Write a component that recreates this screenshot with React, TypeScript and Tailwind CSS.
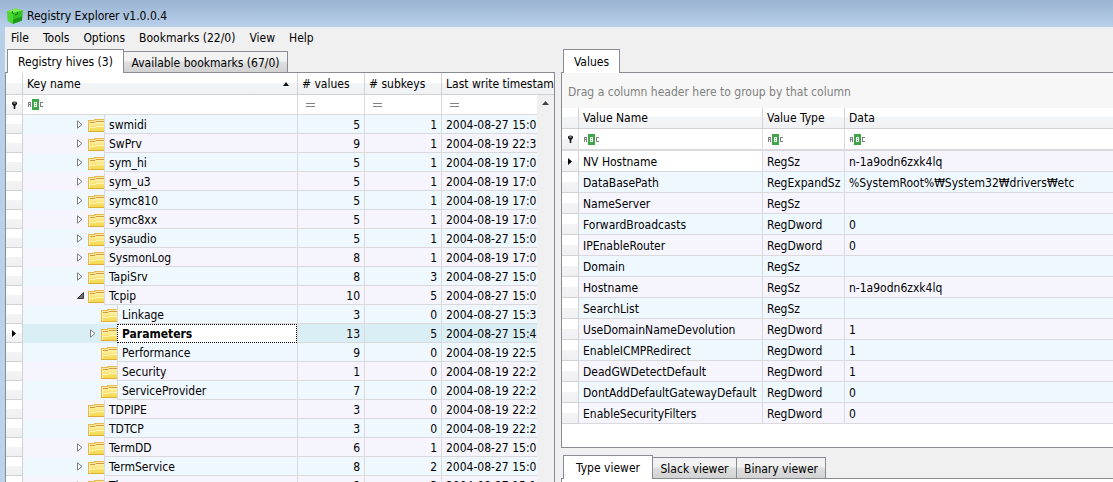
import React from "react";

type HiveRow = {
  name: string;
  values: number;
  subkeys: number;
  written: string;
  level?: number;
  state?: "open" | "closed";
  selected?: boolean;
};

const hiveRows: HiveRow[] = [
  { name: "swmidi", values: 5, subkeys: 1, written: "2004-08-27 15:0", state: "closed" },
  { name: "SwPrv", values: 9, subkeys: 1, written: "2004-08-19 22:3", state: "closed" },
  { name: "sym_hi", values: 5, subkeys: 1, written: "2004-08-19 17:0", state: "closed" },
  { name: "sym_u3", values: 5, subkeys: 1, written: "2004-08-19 17:0", state: "closed" },
  { name: "symc810", values: 5, subkeys: 1, written: "2004-08-19 17:0", state: "closed" },
  { name: "symc8xx", values: 5, subkeys: 1, written: "2004-08-19 17:0", state: "closed" },
  { name: "sysaudio", values: 5, subkeys: 1, written: "2004-08-27 15:0", state: "closed" },
  { name: "SysmonLog", values: 8, subkeys: 1, written: "2004-08-19 17:0", state: "closed" },
  { name: "TapiSrv", values: 8, subkeys: 3, written: "2004-08-27 15:0", state: "closed" },
  { name: "Tcpip", values: 10, subkeys: 5, written: "2004-08-27 15:0", state: "open" },
  { name: "Linkage", values: 3, subkeys: 0, written: "2004-08-27 15:3", level: 1 },
  { name: "Parameters", values: 13, subkeys: 5, written: "2004-08-27 15:4", level: 1, state: "closed", selected: true },
  { name: "Performance", values: 9, subkeys: 0, written: "2004-08-19 22:5", level: 1 },
  { name: "Security", values: 1, subkeys: 0, written: "2004-08-19 22:2", level: 1 },
  { name: "ServiceProvider", values: 7, subkeys: 0, written: "2004-08-19 22:2", level: 1 },
  { name: "TDPIPE", values: 3, subkeys: 0, written: "2004-08-19 22:2" },
  { name: "TDTCP", values: 3, subkeys: 0, written: "2004-08-19 22:2" },
  { name: "TermDD", values: 6, subkeys: 1, written: "2004-08-27 15:0", state: "closed" },
  { name: "TermService", values: 8, subkeys: 2, written: "2004-08-27 15:0", state: "closed" },
  { name: "Themes", values: 9, subkeys: 3, written: "2004-08-27 15:1", state: "closed" },
];

const valueRows: [string, string, string][] = [
  ["NV Hostname", "RegSz", "n-1a9odn6zxk4lq"],
  ["DataBasePath", "RegExpandSz", "%SystemRoot%₩System32₩drivers₩etc"],
  ["NameServer", "RegSz", ""],
  ["ForwardBroadcasts", "RegDword", "0"],
  ["IPEnableRouter", "RegDword", "0"],
  ["Domain", "RegSz", ""],
  ["Hostname", "RegSz", "n-1a9odn6zxk4lq"],
  ["SearchList", "RegSz", ""],
  ["UseDomainNameDevolution", "RegDword", "1"],
  ["EnableICMPRedirect", "RegDword", "1"],
  ["DeadGWDetectDefault", "RegDword", "1"],
  ["DontAddDefaultGatewayDefault", "RegDword", "0"],
  ["EnableSecurityFilters", "RegDword", "0"],
];

const headBg = "bg-[linear-gradient(#ffffff_0_45%,#f4f5f7_45%,#f0f1f3_100%)]";
const headCell = "border-r border-b border-[#d2d2d4] px-1 text-left font-normal truncate text-clip";
const filterCell = "border-r border-b border-[#dadadc] bg-white px-1";
const bodyCell = "border-r border-b border-[#dadadc] px-1 pt-0.5 whitespace-nowrap overflow-hidden";
const markBg = "bg-[linear-gradient(#ffffff_0_50%,#f4f4f5_50%,#f0f0f2_100%)]";

function CubeIcon() {
  return (
    <svg width="16" height="16" viewBox="0 0 16 16" aria-hidden="true">
      <path d="M.5 3.200 8.500.6 15.500 2.500 15 12.500 6 15.700.8 12.700z" fill="#2fb51f" />
      <path d="M.5 3.200 8.500.6 15.500 2.500 6.400 5z" fill="#7df04d" />
      <path d="M.5 3.200 6.400 5 6 15.700.8 12.700z" fill="#49d92f" />
      <path d="M6.400 5 15.500 2.500 15 12.500 6 15.700z" fill="#33c522" />
      <path d="m6.200 11.500 8.900-3-.1 4L6 15.700z" fill="#1c9a15" />
      <path d="M5.500 3v2.200l1.500.4M10.500 4v2L8 7" fill="none" stroke="#14770f" />
    </svg>
  );
}

function FolderIcon() {
  return (
    <svg width="16" height="14" viewBox="0 0 16 14" className="shrink-0" aria-hidden="true">
      <defs>
        <linearGradient id="folder" x1="0" y1="0" x2="0" y2="1">
          <stop offset="0" stopColor="#fdf2a8" />
          <stop offset=".5" stopColor="#f9e375" />
          <stop offset="1" stopColor="#f5d84c" />
        </linearGradient>
      </defs>
      <path d="M0 2h6V1h10v13H0z" fill="#e9b94a" />
      <path d="M1 3h5.500l1-1H16v2H1z" fill="#fbe9a6" />
      <path d="M1 4h15v9H1z" fill="url(#folder)" />
      <path d="M2 4.500h5l1-1h8" fill="none" stroke="#d49b3f" />
      <path d="M1.500 5v8" stroke="#fdf0a8" />
      <path d="M2 9.500h5l2-1h7" fill="none" stroke="#fdf3b4" />
      <path d="M0 13.500h16" stroke="#dfae38" />
    </svg>
  );
}

function Expander({ state }: { state?: "open" | "closed" }) {
  return (
    <svg width="7" height="9" viewBox="0 0 7 9" className="shrink-0" aria-hidden="true">
      {state === "closed" && <path d="M.5.8 5 4.500.5 8.200z" fill="#fff" stroke="#808080" />}
      {state === "open" && <path d="M6.500 1.500v6h-6z" fill="#707070" stroke="#3a3a3a" />}
    </svg>
  );
}

function RowArrow() {
  return (
    <svg width="4" height="7" viewBox="0 0 4 7" className="mx-auto block" aria-hidden="true">
      <path d="M0 0 4 3.500 0 7z" fill="#000" />
    </svg>
  );
}

function PinIcon() {
  return (
    <svg width="7" height="8" viewBox="0 0 7 8" className="mx-auto block" aria-hidden="true">
      <path d="M1 1.400Q3.500-.6 6 1.400V3L4.300 5V8H2.700V5L1 3z" fill="#111" />
      <path d="M2.500 2h2" stroke="#fff" />
    </svg>
  );
}

function ContainsFilter({ label }: { label: string }) {
  return (
    <button type="button" aria-label={label} className="flex h-4 items-center pl-px">
      <svg width="16" height="11" viewBox="0 0 16 11" shapeRendering="crispEdges" aria-hidden="true">
        <rect x="4" width="7" height="11" fill="#3fa648" />
        <path d="M.5 8V3.500H2.500V8M.5 5.500h2" fill="none" stroke="#808080" />
        <path d="M6.500 3v5M6 3.500h2.500V7.500H6M6 5.500h2" fill="none" stroke="#fff" />
        <path d="M15 3.500H12.500V7.500H15" fill="none" stroke="#808080" />
      </svg>
    </button>
  );
}

function EqualsFilter({ label }: { label: string }) {
  return (
    <button type="button" aria-label={label} className="flex h-4 items-center pl-1">
      <svg width="9" height="4" viewBox="0 0 9 4" shapeRendering="crispEdges" aria-hidden="true">
        <path d="M0 .5h9M0 3.500h9" stroke="#808080" />
      </svg>
    </button>
  );
}

function Tab({ label, active, className }: { label: string; active?: boolean; className: string }) {
  return (
    <button
      type="button"
      role="tab"
      aria-selected={!!active}
      className={
        (active
          ? "z-10 -mb-px h-6 bg-white "
          : "-ml-px h-[21px] bg-[linear-gradient(#f2f2f2_0_45%,#dfdfdf_50%,#d2d2d2_100%)] pt-px ") +
        "flex items-center justify-center border border-b-0 border-[#898c95] whitespace-nowrap " +
        className
      }
    >
      {label}
    </button>
  );
}

function HivesTable() {
  return (
    <table className="w-full table-fixed border-separate border-spacing-0">
      <colgroup>
        <col className="w-[17px]" />
        <col />
        <col className="w-[67px]" />
        <col className="w-[77px]" />
        <col className="w-[95px]" />
        <col className="w-[17px]" />
      </colgroup>
      <thead>
        <tr className={"h-[22px] " + headBg}>
          <th className={headCell} aria-label="Row" />
          <th className={headCell}>
            <span className="flex items-center justify-between">
              Key name
              <svg width="6" height="4" viewBox="0 0 6 4" className="mr-1" aria-hidden="true">
                <path d="M3 0 6 4H0z" fill="#111" />
              </svg>
            </span>
          </th>
          <th className={headCell}># values</th>
          <th className={headCell}># subkeys</th>
          <th className={headCell + " border-r-0 pr-0"} colSpan={2}>Last write timestamp</th>
        </tr>
      </thead>
      <tbody>
        <tr className="h-5">
          <td className={"border-r border-b border-[#dadadc] " + markBg}><PinIcon /></td>
          <td className={filterCell}><ContainsFilter label="Filter key name" /></td>
          <td className={filterCell}><EqualsFilter label="Filter values" /></td>
          <td className={filterCell}><EqualsFilter label="Filter subkeys" /></td>
          <td className={filterCell + " border-r-0"}><EqualsFilter label="Filter timestamp" /></td>
          <td rowSpan={hiveRows.length + 1} className="bg-[#f0f0f0] align-top">
            <button type="button" aria-label="Scroll up" className="flex h-4 w-4 items-center justify-center">
              <svg width="7" height="4" viewBox="0 0 7 4" aria-hidden="true">
                <path d="M3.500 0 7 4H0z" fill="#444" />
              </svg>
            </button>
          </td>
        </tr>
        {hiveRows.map((r, i) => (
          <tr
            key={r.name}
            className={"h-[19px] leading-4 " + (r.selected ? "bg-[#daeef6]" : i % 2 ? "bg-[#f6f5fe]" : "bg-[#f0f8ff]")}
          >
            <td className={"border-r border-b border-[#d2d2d4] " + markBg}>{r.selected && <RowArrow />}</td>
            <td className="border-r border-[#dadadc]">
              <div className={"flex h-[19px] items-center " + (r.level ? "pl-[67px]" : "pl-[54px]")}>
                <Expander state={r.state} />
                <span className="flex pt-px pl-1"><FolderIcon /></span>
                <span
                  className={
                    "flex h-full min-w-0 flex-1 items-center pl-1 " +
                    (r.selected
                      ? "border border-dotted border-black bg-white font-bold"
                      : "border-b border-l border-[#dadadc] pt-0.5")
                  }
                >
                  {r.name}
                </span>
              </div>
            </td>
            <td className={bodyCell + " text-right"}>{r.values}</td>
            <td className={bodyCell + " text-right"}>{r.subkeys}</td>
            <td className={bodyCell + " border-r-0 pr-0"}>{r.written}</td>
          </tr>
        ))}
      </tbody>
    </table>
  );
}

function ValuesTable() {
  return (
    <table className="w-full table-fixed border-separate border-spacing-0">
      <colgroup>
        <col className="w-[17px]" />
        <col className="w-[184px]" />
        <col className="w-[82px]" />
        <col />
      </colgroup>
      <thead>
        <tr className={"h-[21px] " + headBg}>
          <th className={headCell} aria-label="Row" />
          <th className={headCell}>Value Name</th>
          <th className={headCell}>Value Type</th>
          <th className={headCell + " border-r-0"}>Data</th>
        </tr>
      </thead>
      <tbody>
        <tr className="h-[22px]">
          <td className={"border-r border-b-2 border-[#dadadc] " + markBg}><PinIcon /></td>
          <td className={filterCell + " border-b-2"}><ContainsFilter label="Filter value name" /></td>
          <td className={filterCell + " border-b-2"}><ContainsFilter label="Filter value type" /></td>
          <td className={filterCell + " border-r-0 border-b-2"}><ContainsFilter label="Filter data" /></td>
        </tr>
        {valueRows.map(([name, type, data], i) => (
          <tr key={name} className={"h-[21px] leading-4 " + (i % 2 ? "bg-[#f0f8ff]" : "bg-[#f6f5fe]")}>
            <td className={"border-r border-b border-[#d2d2d4] " + markBg}>{i === 0 && <RowArrow />}</td>
            <td className={bodyCell + (i === 0 ? " bg-white" : "")}>{name}</td>
            <td className={bodyCell}>{type}</td>
            <td className={bodyCell + " border-r-0"}>{data}</td>
          </tr>
        ))}
      </tbody>
    </table>
  );
}

export default function App() {
  return (
    <div className="flex h-screen flex-col overflow-hidden bg-[linear-gradient(#9ab4d2,#b8cfe9_27px,#bdd3ec)] font-['DejaVu_Sans_Condensed','Noto_Sans_CJK_KR',sans-serif] text-[12px] text-black">
      <header className="flex h-[27px] shrink-0 items-center gap-1 pt-1 pl-[7px]">
        <CubeIcon />
        <h1>Registry Explorer v1.0.0.4</h1>
      </header>
      <div className="ml-[5px] flex min-h-0 flex-1 flex-col bg-[#f0f0f0]">
        <nav className="flex h-[22px] shrink-0 items-center gap-3.5 pl-[6px]">
          {["File", "Tools", "Options", "Bookmarks (22/0)", "View", "Help"].map((m) => (
            <button key={m} type="button" className="whitespace-nowrap">{m}</button>
          ))}
        </nav>
        <div className="flex min-h-0 flex-1 gap-[6px]">
          <section className="flex min-h-0 w-[550px] shrink-0 flex-col">
            <div role="tablist" className="flex h-[23px] shrink-0 items-end pl-[2px]">
              <Tab label="Registry hives (3)" active className="w-[117px]" />
              <Tab label="Available bookmarks (67/0)" className="w-[165px]" />
            </div>
            <div className="min-h-0 flex-1 overflow-hidden border border-b-0 border-[#898c95] bg-white">
              <HivesTable />
            </div>
          </section>
          <section className="flex min-h-0 min-w-0 flex-1 flex-col">
            <div role="tablist" className="flex h-[23px] shrink-0 items-end pl-[2px]">
              <Tab label="Values" active className="w-[57px]" />
            </div>
            <div className="min-h-0 flex-1 overflow-hidden border border-r-0 border-[#898c95] bg-white">
              <p className="flex h-[35px] items-center bg-[#f7f7f7] pt-0.5 pl-[6px] text-[#808080]">
                Drag a column header here to group by that column
              </p>
              <ValuesTable />
            </div>
            <div role="tablist" className="flex h-[30px] shrink-0 items-end pl-[2px]">
              <Tab label="Type viewer" active className="w-[90px]" />
              <Tab label="Slack viewer" className="w-[85px]" />
              <Tab label="Binary viewer" className="w-[90px]" />
            </div>
            <div className="h-1 shrink-0 border-t border-l border-[#898c95] bg-white" />
          </section>
        </div>
      </div>
    </div>
  );
}
